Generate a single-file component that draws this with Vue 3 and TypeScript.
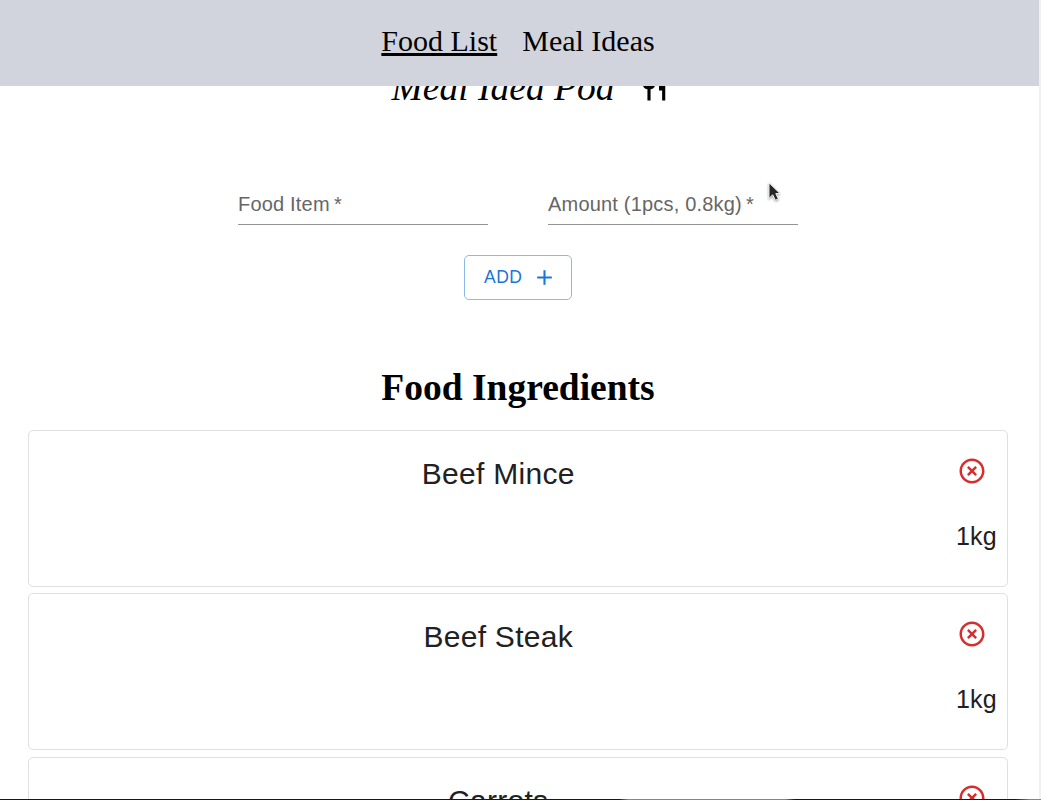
<script setup lang="ts">
interface Food {
  name: string
  amount: string
}

const foods: Food[] = [
  { name: 'Beef Mince', amount: '1kg' },
  { name: 'Beef Steak', amount: '1kg' },
  { name: 'Carrots', amount: '1kg' },
]
const fields: string[] = ['Food Item', 'Amount (1pcs, 0.8kg)']
</script>

<template>
  <div class="window">
    <nav class="nav">
      <a class="link active">Food List</a>
      <a class="link">Meal Ideas</a>
    </nav>
    <main class="page">
      <h1 class="brand">
        <span>Meal Idea Pod</span>
        <svg class="cutlery" viewBox="0 0 24 24"><path d="M11 9H9V2H7v7H5V2H3v7c0 2.12 1.66 3.84 3.75 3.97V22h2.5v-9.03C11.34 12.84 13 11.12 13 9V2h-2v7zm5-3v8h2.5v8H21V2c-2.76 0-5 2.24-5 4z" /></svg>
      </h1>
      <form class="form">
        <div class="fields">
          <label v-for="field in fields" :key="field" class="field">{{ field }}<span class="star">&thinsp;*</span></label>
        </div>
        <button type="button" class="add">
          <span class="caption">ADD</span>
          <svg class="plus" viewBox="0 0 24 24"><path d="M19 13h-6v6h-2v-6H5v-2h6V5h2v6h6v2z" /></svg>
        </button>
      </form>
      <h2 class="heading">Food Ingredients</h2>
      <section class="list">
        <article v-for="food in foods" :key="food.name" class="card">
          <div class="name">{{ food.name }}</div>
          <div class="side">
            <svg class="remove" viewBox="0 0 24 24"><path d="M14.59 8 12 10.59 9.41 8 8 9.41 10.59 12 8 14.59 9.41 16 12 13.41 14.59 16 16 14.59 13.41 12 16 9.41 14.59 8zM12 2C6.47 2 2 6.47 2 12s4.47 10 10 10 10-4.47 10-10S17.53 2 12 2zm0 18c-4.41 0-8-3.59-8-8s3.59-8 8-8 8 3.59 8 8-3.59 8-8 8z" /></svg>
            <div class="amount">{{ food.amount }}</div>
          </div>
        </article>
      </section>
    </main>
    <div class="scrollbar"></div>
    <div class="edge"></div>
    <svg class="cursor" viewBox="0 0 16 24"><path d="M2 2v17l4-4 3 6 3.2-1.5-2.8-5.8H14z" /></svg>
  </div>
</template>

<style>
body {
  margin: 0;
  overflow: hidden;
}
</style>

<style scoped>
.window {
  position: relative;
  width: 1041px;
  height: 800px;
  overflow: hidden;
  background: #fff;
  color: #000;
  font-family: "Liberation Serif", "Times New Roman", serif;
}
.nav {
  display: flex;
  justify-content: center;
  gap: 25px;
  box-sizing: border-box;
  width: 1039px;
  height: 86px;
  padding: 24px 3px 0 0;
  background: #d1d4dc;
}
.link {
  font-size: 30px;
  line-height: 34px;
}
.active {
  text-decoration: underline;
}
.page {
  width: 1036px;
  height: 714px;
  overflow: hidden;
}
.brand {
  display: flex;
  align-items: center;
  justify-content: center;
  gap: 25px;
  height: 44px;
  margin: -20px 0 0 25px;
  font-size: 37.5px;
  font-weight: 400;
  font-style: italic;
  line-height: 44px;
}
.cutlery {
  width: 30px;
  height: 30px;
}
.form {
  display: flex;
  flex-direction: column;
  align-items: center;
  margin-top: 79px;
}
.fields {
  display: flex;
  gap: 60px;
}
.field {
  box-sizing: border-box;
  width: 250px;
  height: 36px;
  border-bottom: 1px solid #949494;
  color: #666;
  font: 20px/30px "Liberation Sans", Arial, sans-serif;
  letter-spacing: 0.00938em;
}
.add {
  display: flex;
  align-items: center;
  justify-content: space-between;
  box-sizing: border-box;
  width: 108px;
  height: 45px;
  margin: 30px 0 0;
  padding: 0 16px 0 19px;
  border: 1px solid #8cbae8;
  border-radius: 5px;
  background: transparent;
  color: #1976d2;
  font: 17.5px/30px "Liberation Sans", Arial, sans-serif;
  letter-spacing: 0.02857em;
}
.caption {
  padding-bottom: 2px;
}
.plus {
  width: 25px;
  height: 25px;
  margin-right: -2px;
  fill: currentColor;
}
.heading {
  margin: 66px 0 0;
  font-size: 37.5px;
  line-height: 44px;
  text-align: center;
}
.list {
  display: grid;
  row-gap: 6.4px;
  margin: 20px 28px 0;
}
.card {
  display: flex;
  box-sizing: border-box;
  height: 157px;
  border: 1px solid #e0e0e0;
  border-radius: 5px;
  color: #212121;
  font-family: "Liberation Sans", Arial, sans-serif;
}
.name {
  flex: 1;
  padding: 20px 0 0 29.4px;
  font-size: 30px;
  line-height: 45px;
  letter-spacing: 0.00938em;
  text-align: center;
}
.side {
  display: flex;
  flex-direction: column;
  align-items: center;
  width: 69px;
  margin-left: -1px;
  margin-right: 1px;
  padding-top: 25px;
}
.remove {
  width: 30px;
  height: 30px;
  fill: #d32f2f;
}
.amount {
  margin: 31px 0 0 10px;
  font-size: 25px;
  line-height: 38px;
  letter-spacing: 0.00938em;
}
.scrollbar {
  position: absolute;
  top: 0;
  right: 0;
  width: 2px;
  height: 799px;
  background: #f0f0f0;
}
.edge {
  position: absolute;
  bottom: 0;
  left: 0;
  width: 100%;
  height: 1px;
  background: linear-gradient(90deg, #16171b 0 619px, #6c8fa0 628px 785px, #16171b 795px 1015px, #6c8fa0 1030px);
}
.cursor {
  position: absolute;
  top: 181px;
  left: 767px;
  width: 15px;
  height: 22px;
  fill: #262626;
  stroke: #fff;
  stroke-width: 1;
  filter: drop-shadow(0 1px 1px #0006);
}
</style>
